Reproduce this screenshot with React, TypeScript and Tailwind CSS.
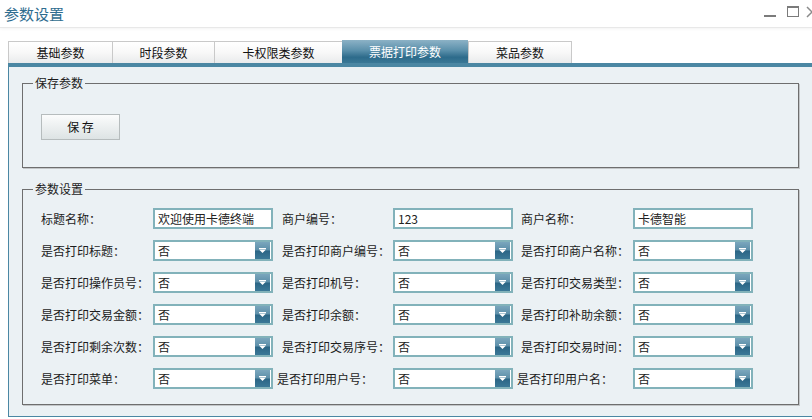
import React from 'react'

type Cell = { label: string; kind: 'text' | 'select'; value: string }

const rows: Cell[][] = [
  [
    { label: '标题名称：', kind: 'text', value: '欢迎使用卡德终端' },
    { label: '商户编号：', kind: 'text', value: '123' },
    { label: '商户名称：', kind: 'text', value: '卡德智能' },
  ],
  [
    { label: '是否打印标题：', kind: 'select', value: '否' },
    { label: '是否打印商户编号：', kind: 'select', value: '否' },
    { label: '是否打印商户名称：', kind: 'select', value: '否' },
  ],
  [
    { label: '是否打印操作员号：', kind: 'select', value: '否' },
    { label: '是否打印机号：', kind: 'select', value: '否' },
    { label: '是否打印交易类型：', kind: 'select', value: '否' },
  ],
  [
    { label: '是否打印交易金额：', kind: 'select', value: '否' },
    { label: '是否打印余额：', kind: 'select', value: '否' },
    { label: '是否打印补助余额：', kind: 'select', value: '否' },
  ],
  [
    { label: '是否打印剩余次数：', kind: 'select', value: '否' },
    { label: '是否打印交易序号：', kind: 'select', value: '否' },
    { label: '是否打印交易时间：', kind: 'select', value: '否' },
  ],
  [
    { label: '是否打印菜单：', kind: 'select', value: '否' },
    { label: '是否打印用户号：', kind: 'select', value: '否' },
    { label: '是否打印用户名：', kind: 'select', value: '否' },
  ],
]

const tabs = [
  { name: '基础参数', w: 'w-[104px]' },
  { name: '时段参数', w: 'w-[102px]' },
  { name: '卡权限类参数', w: 'w-[128px]' },
  { name: '票据打印参数', w: 'w-[126px]' },
  { name: '菜品参数', w: 'w-[104px]' },
]

function Arrow() {
  return (
    <span className="absolute right-[1px] top-[0px] w-[15px] h-[17px] bg-[linear-gradient(#7aa6bd_0%,#5d8fa9_48%,#2b6585_52%,#3b7897_100%)]">
      <svg width="15" height="17" viewBox="0 0 15 17" className="block">
        <rect x="4" y="6" width="7" height="1" fill="#fff" />
        <polygon points="4,7.5 11,7.5 7.5,11" fill="#fff" />
      </svg>
    </span>
  )
}

function Input({ cell }: { cell: Cell }) {
  return (
    <div className="relative w-[120px] h-[21px] border-2 border-[#82b2ba] bg-white pl-[3px] leading-[17px] text-[#222]">
      {cell.value}
      {cell.kind === 'select' && <Arrow />}
    </div>
  )
}

export default function App() {
  return (
    <div className="w-[812px] h-[419px] overflow-hidden bg-white text-[12px] text-[#1c1c1c] font-['Noto_Sans_CJK_SC','Microsoft_YaHei',sans-serif]">
      <div className="w-[830px]">
        {/* 标题栏 */}
        <div className="flex h-[28px] items-center pl-[4px] pr-[12px] border-b border-[#e8e8e8] shadow-[0_1px_3px_rgba(0,0,0,0.05)]">
          <span className="text-[15px] text-[#2f6d8f] leading-none">参数设置</span>
          <div className="ml-auto flex items-center">
            <span className="w-[12px] h-[2px] bg-[#7b7b7b] mt-[4px]" />
            <span className="ml-[11px] w-[12px] h-[11px] border border-t-2 border-[#7b7b7b] -mt-[4px]" />
            <svg width="12" height="12" viewBox="0 0 12 12" className="ml-[7px] -mt-[4px]">
              <path d="M1 1 L11 11 M11 1 L1 11" stroke="#8a8a8a" strokeWidth="1.5" />
            </svg>
          </div>
        </div>

        {/* 选项卡 */}
        <div className="mt-[12px] pl-[8px] flex items-end h-[23px]">
          {tabs.map((t, i) => {
            const active = t.name === '票据打印参数'
            return active ? (
              <div
                key={t.name}
                className={`${t.w} h-[23px] flex items-center justify-center text-white bg-[linear-gradient(#8cb2c6_0%,#5b90ab_45%,#2d6b8b_75%,#3a7896_100%)]`}
              >
                {t.name}
              </div>
            ) : (
              <div
                key={t.name}
                className={`${t.w} h-[22px] flex items-center justify-center border-t border-l border-[#c9c9c9] ${i === tabs.length - 1 ? 'border-r' : ''} bg-[linear-gradient(#ffffff_0%,#f8f8f8_50%,#e9ebec_100%)] text-[#111]`}
              >
                {t.name}
              </div>
            )
          })}
        </div>

        {/* 内容面板 */}
        <div className="ml-[8px] border-t-4 border-t-[#4b87a3] border-l border-b border-[#4b87a3] bg-[#ebf1f4] pl-[13px] pb-[11px] pt-[8px]">
          <fieldset className="w-[777px] h-[93px] border border-[#6e6e6e] shadow-[1px_1px_0_#c3c6c8]">
            <legend className="ml-[10px] px-[2px] leading-[16px]">保存参数</legend>
            <button className="ml-[18px] mt-[23px] w-[79px] h-[26px] border border-[#b6bcbd] bg-[linear-gradient(#fbfcfc,#dde3e4)] text-[12px] text-[#111]">
              保 存
            </button>
          </fieldset>

          <fieldset className="mt-[13px] w-[777px] h-[224px] border border-[#6e6e6e] shadow-[1px_1px_0_#c3c6c8]">
            <legend className="ml-[10px] px-[2px] leading-[16px]">参数设置</legend>
            <div className="mt-[11px] pl-[18px] flex flex-col gap-[11px]">
              {rows.map((row, ri) => {
                const last = ri === rows.length - 1
                return (
                  <div key={ri} className="flex items-center h-[21px]">
                    <span className="w-[112px]">{row[0].label}</span>
                    <Input cell={row[0]} />
                    <span className={last ? 'ml-[4px] w-[116px]' : 'ml-[9px] w-[111px]'}>{row[1].label}</span>
                    <Input cell={row[1]} />
                    <span className={last ? 'ml-[4px] w-[116px]' : 'ml-[8px] w-[112px]'}>{row[2].label}</span>
                    <Input cell={row[2]} />
                  </div>
                )
              })}
            </div>
          </fieldset>
        </div>
      </div>
    </div>
  )
}
